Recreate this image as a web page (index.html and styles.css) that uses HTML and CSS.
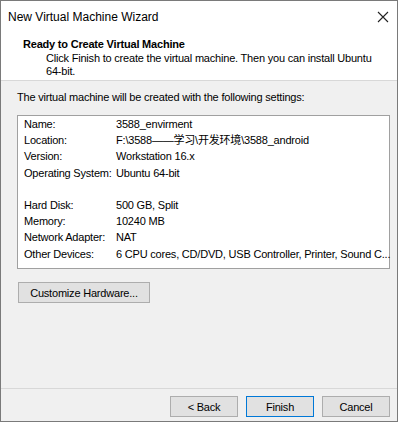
FILE: index.html
```html
<!DOCTYPE html>
<html>
<head>
<meta charset="utf-8">
<link rel="stylesheet" href="styles.css">
</head>
<body>
<div class="window">
  <div class="titlebar">
    <span class="title">New Virtual Machine Wizard</span>
    <svg class="close" width="12" height="12" viewBox="0 0 12 12"><path d="M1 1 L11 11 M11 1 L1 11" stroke="#222" stroke-width="1.1" fill="none"/></svg>
  </div>
  <div class="header">
    <div class="h-title">Ready to Create Virtual Machine</div>
    <div class="h-desc">Click Finish to create the virtual machine. Then you can install Ubuntu 64-bit.</div>
  </div>
  <div class="content">
    <div class="intro">The virtual machine will be created with the following settings:</div>
    <div class="settings">
      <div class="row"><span class="k">Name:</span><span class="v">3588_envirment</span></div>
      <div class="row"><span class="k">Location:</span><span class="v">F:\3588——学习\开发环境\3588_android</span></div>
      <div class="row"><span class="k">Version:</span><span class="v">Workstation 16.x</span></div>
      <div class="row"><span class="k">Operating System:</span><span class="v">Ubuntu 64-bit</span></div>
      <div class="row blank"></div>
      <div class="row"><span class="k">Hard Disk:</span><span class="v">500 GB, Split</span></div>
      <div class="row"><span class="k">Memory:</span><span class="v">10240 MB</span></div>
      <div class="row"><span class="k">Network Adapter:</span><span class="v">NAT</span></div>
      <div class="row"><span class="k">Other Devices:</span><span class="v">6 CPU cores, CD/DVD, USB Controller, Printer, Sound C...</span></div>
    </div>
    <button class="btn custom">Customize Hardware...</button>
  </div>
  <div class="footer">
    <button class="btn">&lt; Back</button>
    <button class="btn default">Finish</button>
    <button class="btn">Cancel</button>
  </div>
</div>
</body>
</html>
```
FILE: styles.css
```css
html, body { margin: 0; padding: 0; background: #ffffff; }
body { font-family: "Liberation Sans", Arial, "Noto Sans CJK SC", sans-serif; font-size: 11px; color: #000; letter-spacing: -0.2px; }
.window {
  width: 396px; height: 420px;
  border: 1px solid #7a7a7a;
  background: #f0f0f0;
  display: flex; flex-direction: column;
}
.titlebar {
  height: 31px; background: #fff;
  display: flex; align-items: center; justify-content: space-between;
  padding: 0 8px 0 7px;
  letter-spacing: 0;
}
.title { font-size: 12px; color: #000; }
.header {
  background: #fff; height: 49px;
  border-bottom: 1px solid #d8d8d8;
  padding: 5px 0 0 22px; box-sizing: border-box;
}
.h-title { font-weight: bold; line-height: 14px; }
.h-desc { padding-left: 23px; line-height: 13px; width: 330px; margin-top: 1px; }
.content { flex: 1; padding: 9px 8px 0 16px; }
.intro { line-height: 14px; }
.settings {
  margin-top: 11px;
  background: #fff; border: 1px solid #a0a0a0;
  height: 154px; box-sizing: border-box;
  padding: 0 0 0 6px;
  width: 373px;
}
.row { display: flex; height: 16.2px; line-height: 16px; white-space: nowrap; }
.k { width: 92px; flex: none; }
.btn {
  font-family: "Liberation Sans", Arial, sans-serif; font-size: 11px; color: #000;
  letter-spacing: -0.2px;
  background: #e1e1e1; border: 1px solid #adadad;
  height: 21px; width: 68px; padding: 0;
}
.btn.custom { width: 132px; margin-top: 13px; margin-left: 1px; }
.btn.default { border-color: #0078d7; }
.footer {
  height: 33px; border-top: 1px solid #d8d8d8;
  display: flex; justify-content: flex-end; gap: 8px;
  padding: 7px 7px 0 0; box-sizing: border-box;
}
```
